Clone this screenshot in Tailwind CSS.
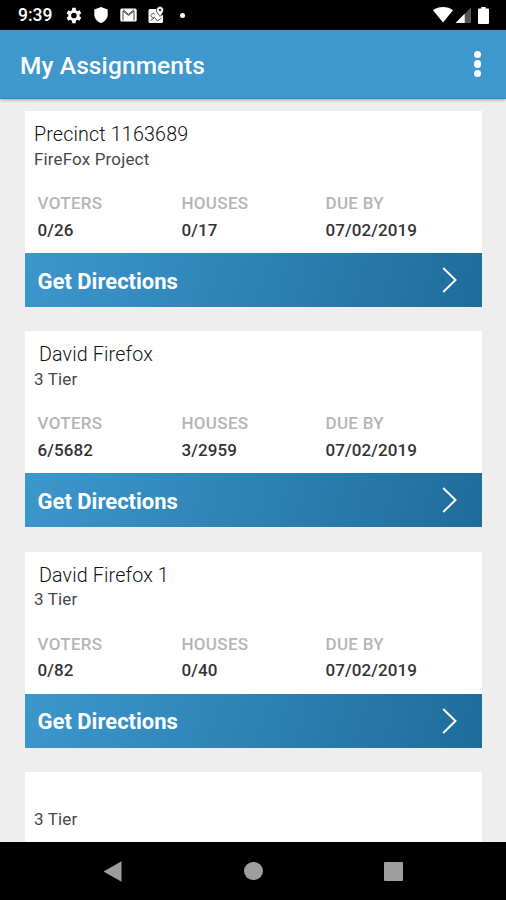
<!DOCTYPE html>
<html lang="en">
<head>
<meta charset="utf-8">
<title>My Assignments</title>
<script src="https://cdn.jsdelivr.net/npm/@tailwindcss/browser@4"></script>
</head>
<body class="w-[506px] h-[900px] overflow-hidden bg-[#eeeeee] font-['Roboto',sans-serif]">
<div class="flex h-[900px] flex-col">
  <div class="flex h-[29.500px] shrink-0 items-center bg-black pl-[18px] pr-[17px] pt-[1px] text-white">
    <span class="w-[47px] whitespace-nowrap pt-[1px] text-[17.500px] font-medium leading-none">9:39</span>
    <svg class="h-[17px] w-[18px]" viewBox="3 2 20 20" fill="currentColor"><path d="M19.400 13a7.500 7.500 0 0 0 0-2l2.100-1.600-2-3.500-2.500 1a7.300 7.300 0 0 0-1.700-1L14.900 3h-4l-.4 2.900a7.300 7.300 0 0 0-1.700 1l-2.500-1-2 3.500L6.400 11a7.500 7.500 0 0 0 0 2l-2.100 1.600 2 3.500 2.500-1a7.300 7.300 0 0 0 1.700 1l.4 2.900h4l.4-2.900a7.300 7.300 0 0 0 1.700-1l2.500 1 2-3.500zM12.900 15.300a3.300 3.300 0 1 1 0-6.600 3.300 3.300 0 0 1 0 6.600z" fill-rule="evenodd"/></svg>
    <svg class="ml-[11px] h-[16px] w-[14px]" viewBox="0 0 14 16" fill="currentColor"><path d="M7 0l6.700 2.500v5.200c0 3.600-2.800 6.900-6.700 8.300C3.100 14.600.3 11.300.3 7.700V2.500z"/></svg>
    <svg class="ml-[12px] h-[14px] w-[17px]" viewBox="0 0 17 14"><rect x=".3" y=".5" width="16.400" height="13" rx="1.500" fill="#fff"/><path d="M3 12.500V3l5.500 4.500L14 3v9.500M3 1.700l5.500 4.600L14 1.700" fill="none" stroke="#444" stroke-width="1"/></svg>
    <svg class="-mt-[1px] ml-[11px] h-[18px] w-[17px]" viewBox="0 0 17 18"><path d="M2 3h6.500c-.2 3 1.500 4.500 3 7l3.500-1v6.500a1.500 1.500 0 0 1-1.500 1.500H2a1.500 1.500 0 0 1-1.500-1.500v-11A1.500 1.500 0 0 1 2 3z" fill="#fff"/><path d="M2.500 14.500l4-3 3 3.500 4-3M7 8.500a2.200 2.200 0 1 0 0 2.500" fill="none" stroke="#555" stroke-width="1"/><path d="M12 .5A3.600 3.600 0 0 0 8.400 4c0 2.600 3.600 6.500 3.600 6.500S15.600 6.600 15.600 4A3.600 3.600 0 0 0 12 .5z" fill="#fff" stroke="#000" stroke-width=".6"/><circle cx="12" cy="4" r="1.300" fill="#333"/></svg>
    <div class="ml-[15px] h-[5px] w-[5px] rounded-full bg-white"></div>
    <svg class="ml-auto h-[16px] w-[20px]" viewBox="0 0 20 16" fill="currentColor"><path d="M0 3.200C2.800 1.100 6.200 0 10 0s7.200 1.100 10 3.200L10 15.500z"/></svg>
    <svg class="ml-[2px] h-[16px] w-[16px]" viewBox="0 0 16 16"><path d="M16 .5V16H.5z" fill="#555"/><path d="M9.700 6.800V16H.5z" fill="#fff"/></svg>
    <svg class="ml-[7px] h-[17px] w-[11px]" viewBox="0 0 11 17" fill="currentColor"><path d="M3.300 0h4.400v1.600H10a1 1 0 0 1 1 1V16a1 1 0 0 1-1 1H1a1 1 0 0 1-1-1V2.600a1 1 0 0 1 1-1h2.300z"/></svg>
  </div>
  <header class="z-10 flex h-[69.500px] shrink-0 items-center justify-between border-b border-[#2f86b8] bg-[#3e97cd] pl-[20px] pr-[25px] pt-[4px] text-white shadow-[0_1px_3px_rgba(0,0,0,0.3)]">
    <h1 class="whitespace-nowrap text-[24.500px] font-medium leading-none tracking-[0.100px]">My Assignments</h1>
    <div class="-mt-[4px] flex flex-col gap-[2px]">
      <span class="h-[7.500px] w-[7.500px] rounded-full bg-white"></span>
      <span class="h-[7.500px] w-[7.500px] rounded-full bg-white"></span>
      <span class="h-[7.500px] w-[7.500px] rounded-full bg-white"></span>
    </div>
  </header>
  <main id="list" class="flex min-h-0 flex-1 flex-col gap-[24.300px] overflow-hidden pl-[25px] pr-[24px] pt-[12px]"></main>
  <nav class="flex h-[58px] shrink-0 items-center bg-black pl-[103px]">
    <svg class="h-[21px] w-[19px]" viewBox="0 0 19 21"><path d="M.5 10.500L18.500.3v20.400z" fill="#9e9e9e"/></svg>
    <div class="ml-[122px] h-[18.500px] w-[18.500px] rounded-full bg-[#9e9e9e]"></div>
    <div class="ml-[121px] h-[19px] w-[19.500px] rounded-[1px] bg-[#9e9e9e]"></div>
  </nav>
</div>
<template id="card">
  <section class="shrink-0 bg-white">
    <div class="flex h-[142px] flex-col">
      <h2 data-f="title" class="mt-[13px] h-[22px] whitespace-pre pl-[9px] text-[19.700px] font-light leading-[22px] tracking-[0.150px] text-[#111111]"></h2>
      <p data-f="project" class="mt-[2.500px] h-[20px] whitespace-nowrap pl-[9px] text-[17px] leading-[20px] tracking-[0.150px] text-[#484848]"></p>
      <div data-stats class="mt-[24.500px] grid grid-cols-[144px_144px_1fr] pl-[12.500px] text-[17px] font-medium leading-[20px] tracking-[0.100px]">
        <span class="tracking-[0.300px] text-[#b5b5b5]">VOTERS</span><span class="tracking-[0.300px] text-[#b5b5b5]">HOUSES</span><span class="tracking-[0.300px] text-[#b5b5b5]">DUE BY</span>
        <span data-f="voters" class="mt-[6.500px] text-[#333333]"></span><span data-f="houses" class="mt-[6.500px] text-[#333333]"></span><span class="mt-[6.500px] text-[#333333]">07/02/2019</span>
      </div>
    </div>
    <div data-action class="flex h-[54px] items-center justify-between bg-linear-[105deg] from-[#3c97cd] to-[#1f6c9b] pl-[12.500px] pr-[25px] text-white">
      <span class="pt-[3px] text-[22px] font-bold leading-none">Get Directions</span>
      <svg class="h-[26px] w-[15px]" viewBox="0 0 15 26" fill="none" stroke="#fff" stroke-width="2"><path d="M1.200 1L13.500 13 1.200 25"/></svg>
    </div>
  </section>
</template>
<script>
const rows = [
  ["Precinct 1163689", "FireFox Project", "0/26", "0/17"],
  [" David Firefox", "3 Tier", "6/5682", "3/2959"],
  [" David Firefox 1", "3 Tier", "0/82", "0/40"],
  ["", "3 Tier", null, null]
];
const tpl = document.getElementById("card");
for (const [title, project, voters, houses] of rows) {
  const node = tpl.content.cloneNode(true);
  const data = { title, project, voters, houses };
  for (const k in data) node.querySelector(`[data-f=${k}]`).textContent = data[k];
  if (voters === null) {
    node.querySelector("[data-stats]").remove();
    node.querySelector("[data-action]").remove();
  }
  document.getElementById("list").append(node);
}
</script>
</body>
</html>
